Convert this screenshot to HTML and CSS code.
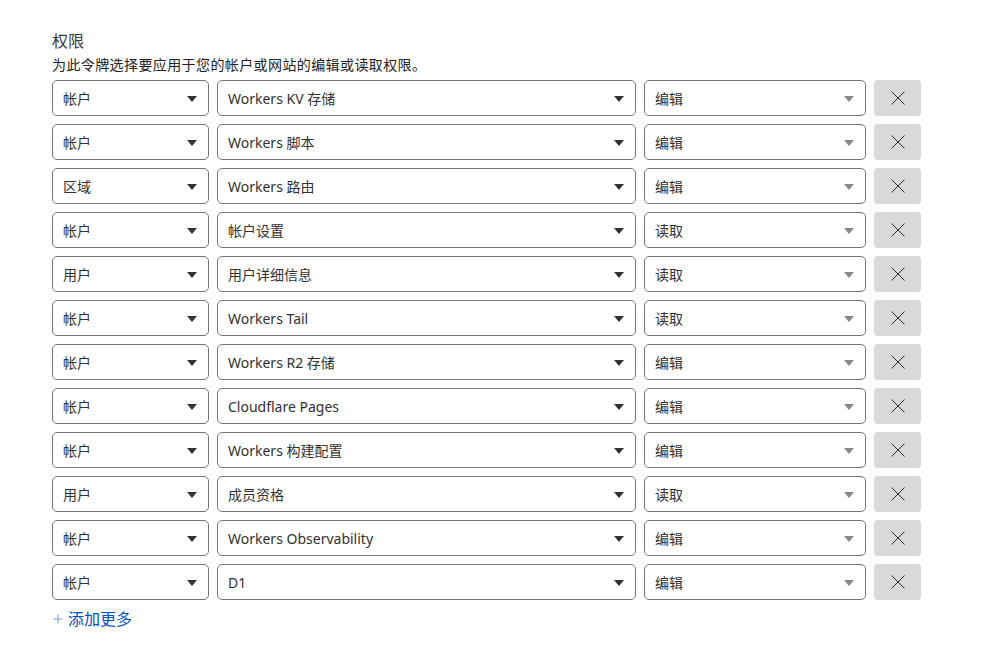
FILE: index.html
```html
<!DOCTYPE html>
<html lang="zh">
<head>
<meta charset="utf-8">
<link rel="stylesheet" href="styles.css">
</head>
<body>
<div class="wrap">
  <h2 class="title">权限</h2>
  <p class="desc">为此令牌选择要应用于您的帐户或网站的编辑或读取权限。</p>
  <div class="rows">
    <div class="row"><div class="sel s1">帐户<span class="arr"></span></div><div class="sel s2">Workers KV 存储<span class="arr"></span></div><div class="sel s3">编辑<span class="arr light"></span></div><button class="del"><svg width="14" height="14" viewBox="0 0 14 14"><path d="M0.5 0.5L13.5 13.5M13.5 0.5L0.5 13.5" stroke="#2a2a2a" stroke-width="1" fill="none"/></svg></button></div>
    <div class="row"><div class="sel s1">帐户<span class="arr"></span></div><div class="sel s2">Workers 脚本<span class="arr"></span></div><div class="sel s3">编辑<span class="arr light"></span></div><button class="del"><svg width="14" height="14" viewBox="0 0 14 14"><path d="M0.5 0.5L13.5 13.5M13.5 0.5L0.5 13.5" stroke="#2a2a2a" stroke-width="1" fill="none"/></svg></button></div>
    <div class="row"><div class="sel s1">区域<span class="arr"></span></div><div class="sel s2">Workers 路由<span class="arr"></span></div><div class="sel s3">编辑<span class="arr light"></span></div><button class="del"><svg width="14" height="14" viewBox="0 0 14 14"><path d="M0.5 0.5L13.5 13.5M13.5 0.5L0.5 13.5" stroke="#2a2a2a" stroke-width="1" fill="none"/></svg></button></div>
    <div class="row"><div class="sel s1">帐户<span class="arr"></span></div><div class="sel s2">帐户设置<span class="arr"></span></div><div class="sel s3">读取<span class="arr light"></span></div><button class="del"><svg width="14" height="14" viewBox="0 0 14 14"><path d="M0.5 0.5L13.5 13.5M13.5 0.5L0.5 13.5" stroke="#2a2a2a" stroke-width="1" fill="none"/></svg></button></div>
    <div class="row"><div class="sel s1">用户<span class="arr"></span></div><div class="sel s2">用户详细信息<span class="arr"></span></div><div class="sel s3">读取<span class="arr light"></span></div><button class="del"><svg width="14" height="14" viewBox="0 0 14 14"><path d="M0.5 0.5L13.5 13.5M13.5 0.5L0.5 13.5" stroke="#2a2a2a" stroke-width="1" fill="none"/></svg></button></div>
    <div class="row"><div class="sel s1">帐户<span class="arr"></span></div><div class="sel s2">Workers Tail<span class="arr"></span></div><div class="sel s3">读取<span class="arr light"></span></div><button class="del"><svg width="14" height="14" viewBox="0 0 14 14"><path d="M0.5 0.5L13.5 13.5M13.5 0.5L0.5 13.5" stroke="#2a2a2a" stroke-width="1" fill="none"/></svg></button></div>
    <div class="row"><div class="sel s1">帐户<span class="arr"></span></div><div class="sel s2">Workers R2 存储<span class="arr"></span></div><div class="sel s3">编辑<span class="arr light"></span></div><button class="del"><svg width="14" height="14" viewBox="0 0 14 14"><path d="M0.5 0.5L13.5 13.5M13.5 0.5L0.5 13.5" stroke="#2a2a2a" stroke-width="1" fill="none"/></svg></button></div>
    <div class="row"><div class="sel s1">帐户<span class="arr"></span></div><div class="sel s2">Cloudflare Pages<span class="arr"></span></div><div class="sel s3">编辑<span class="arr light"></span></div><button class="del"><svg width="14" height="14" viewBox="0 0 14 14"><path d="M0.5 0.5L13.5 13.5M13.5 0.5L0.5 13.5" stroke="#2a2a2a" stroke-width="1" fill="none"/></svg></button></div>
    <div class="row"><div class="sel s1">帐户<span class="arr"></span></div><div class="sel s2">Workers 构建配置<span class="arr"></span></div><div class="sel s3">编辑<span class="arr light"></span></div><button class="del"><svg width="14" height="14" viewBox="0 0 14 14"><path d="M0.5 0.5L13.5 13.5M13.5 0.5L0.5 13.5" stroke="#2a2a2a" stroke-width="1" fill="none"/></svg></button></div>
    <div class="row"><div class="sel s1">用户<span class="arr"></span></div><div class="sel s2">成员资格<span class="arr"></span></div><div class="sel s3">读取<span class="arr light"></span></div><button class="del"><svg width="14" height="14" viewBox="0 0 14 14"><path d="M0.5 0.5L13.5 13.5M13.5 0.5L0.5 13.5" stroke="#2a2a2a" stroke-width="1" fill="none"/></svg></button></div>
    <div class="row"><div class="sel s1">帐户<span class="arr"></span></div><div class="sel s2">Workers Observability<span class="arr"></span></div><div class="sel s3">编辑<span class="arr light"></span></div><button class="del"><svg width="14" height="14" viewBox="0 0 14 14"><path d="M0.5 0.5L13.5 13.5M13.5 0.5L0.5 13.5" stroke="#2a2a2a" stroke-width="1" fill="none"/></svg></button></div>
    <div class="row"><div class="sel s1">帐户<span class="arr"></span></div><div class="sel s2">D1<span class="arr"></span></div><div class="sel s3">编辑<span class="arr light"></span></div><button class="del"><svg width="14" height="14" viewBox="0 0 14 14"><path d="M0.5 0.5L13.5 13.5M13.5 0.5L0.5 13.5" stroke="#2a2a2a" stroke-width="1" fill="none"/></svg></button></div>
  </div>
  <a class="add" href="#"><svg class="plus" width="10" height="10" viewBox="0 0 10 10"><path d="M5 0.5V9.5M0.5 5H9.5" stroke="#7ea6e4" stroke-width="1.2" fill="none"/></svg>添加更多</a>
</div>
</body>
</html>
```
FILE: styles.css
```css
html, body { margin: 0; padding: 0; background: #fff; }
body { font-family: "Noto Sans", "Noto Sans CJK SC", sans-serif; color: #313131; }
.wrap { padding: 30px 0 0 52px; }
.title { margin: 0; font-size: 16px; font-weight: 400; line-height: 22px; color: #36393a; }
.desc { margin: 3px 0 5px; font-size: 14px; letter-spacing: 0.4px; line-height: 20px; color: #222; }
.rows { display: flex; flex-direction: column; gap: 8px; }
.row { display: flex; gap: 8px; height: 36px; }
.sel { position: relative; box-sizing: border-box; height: 36px; border: 1px solid #767676; border-radius: 5px; display: flex; align-items: center; padding-left: 10px; font-size: 14px; color: #313131; background: #fff; }
.s1 { width: 157px; }
.s2 { width: 419px; }
.s3 { width: 222px; }
.arr { position: absolute; right: 11px; top: 15px; width: 0; height: 0; border-left: 5px solid transparent; border-right: 5px solid transparent; border-top: 6px solid #333; }
.arr.light { border-top-color: #8a8a8a; }
.del { width: 47px; height: 36px; border: none; background: #d9d9d9; border-radius: 4px; display: flex; align-items: center; justify-content: center; padding: 0; }
.add { display: inline-flex; align-items: center; gap: 5px; margin-top: 8px; font-size: 16px; line-height: 22px; color: #0051c3; text-decoration: none; }
.plus { margin-left: 1px; }
```
